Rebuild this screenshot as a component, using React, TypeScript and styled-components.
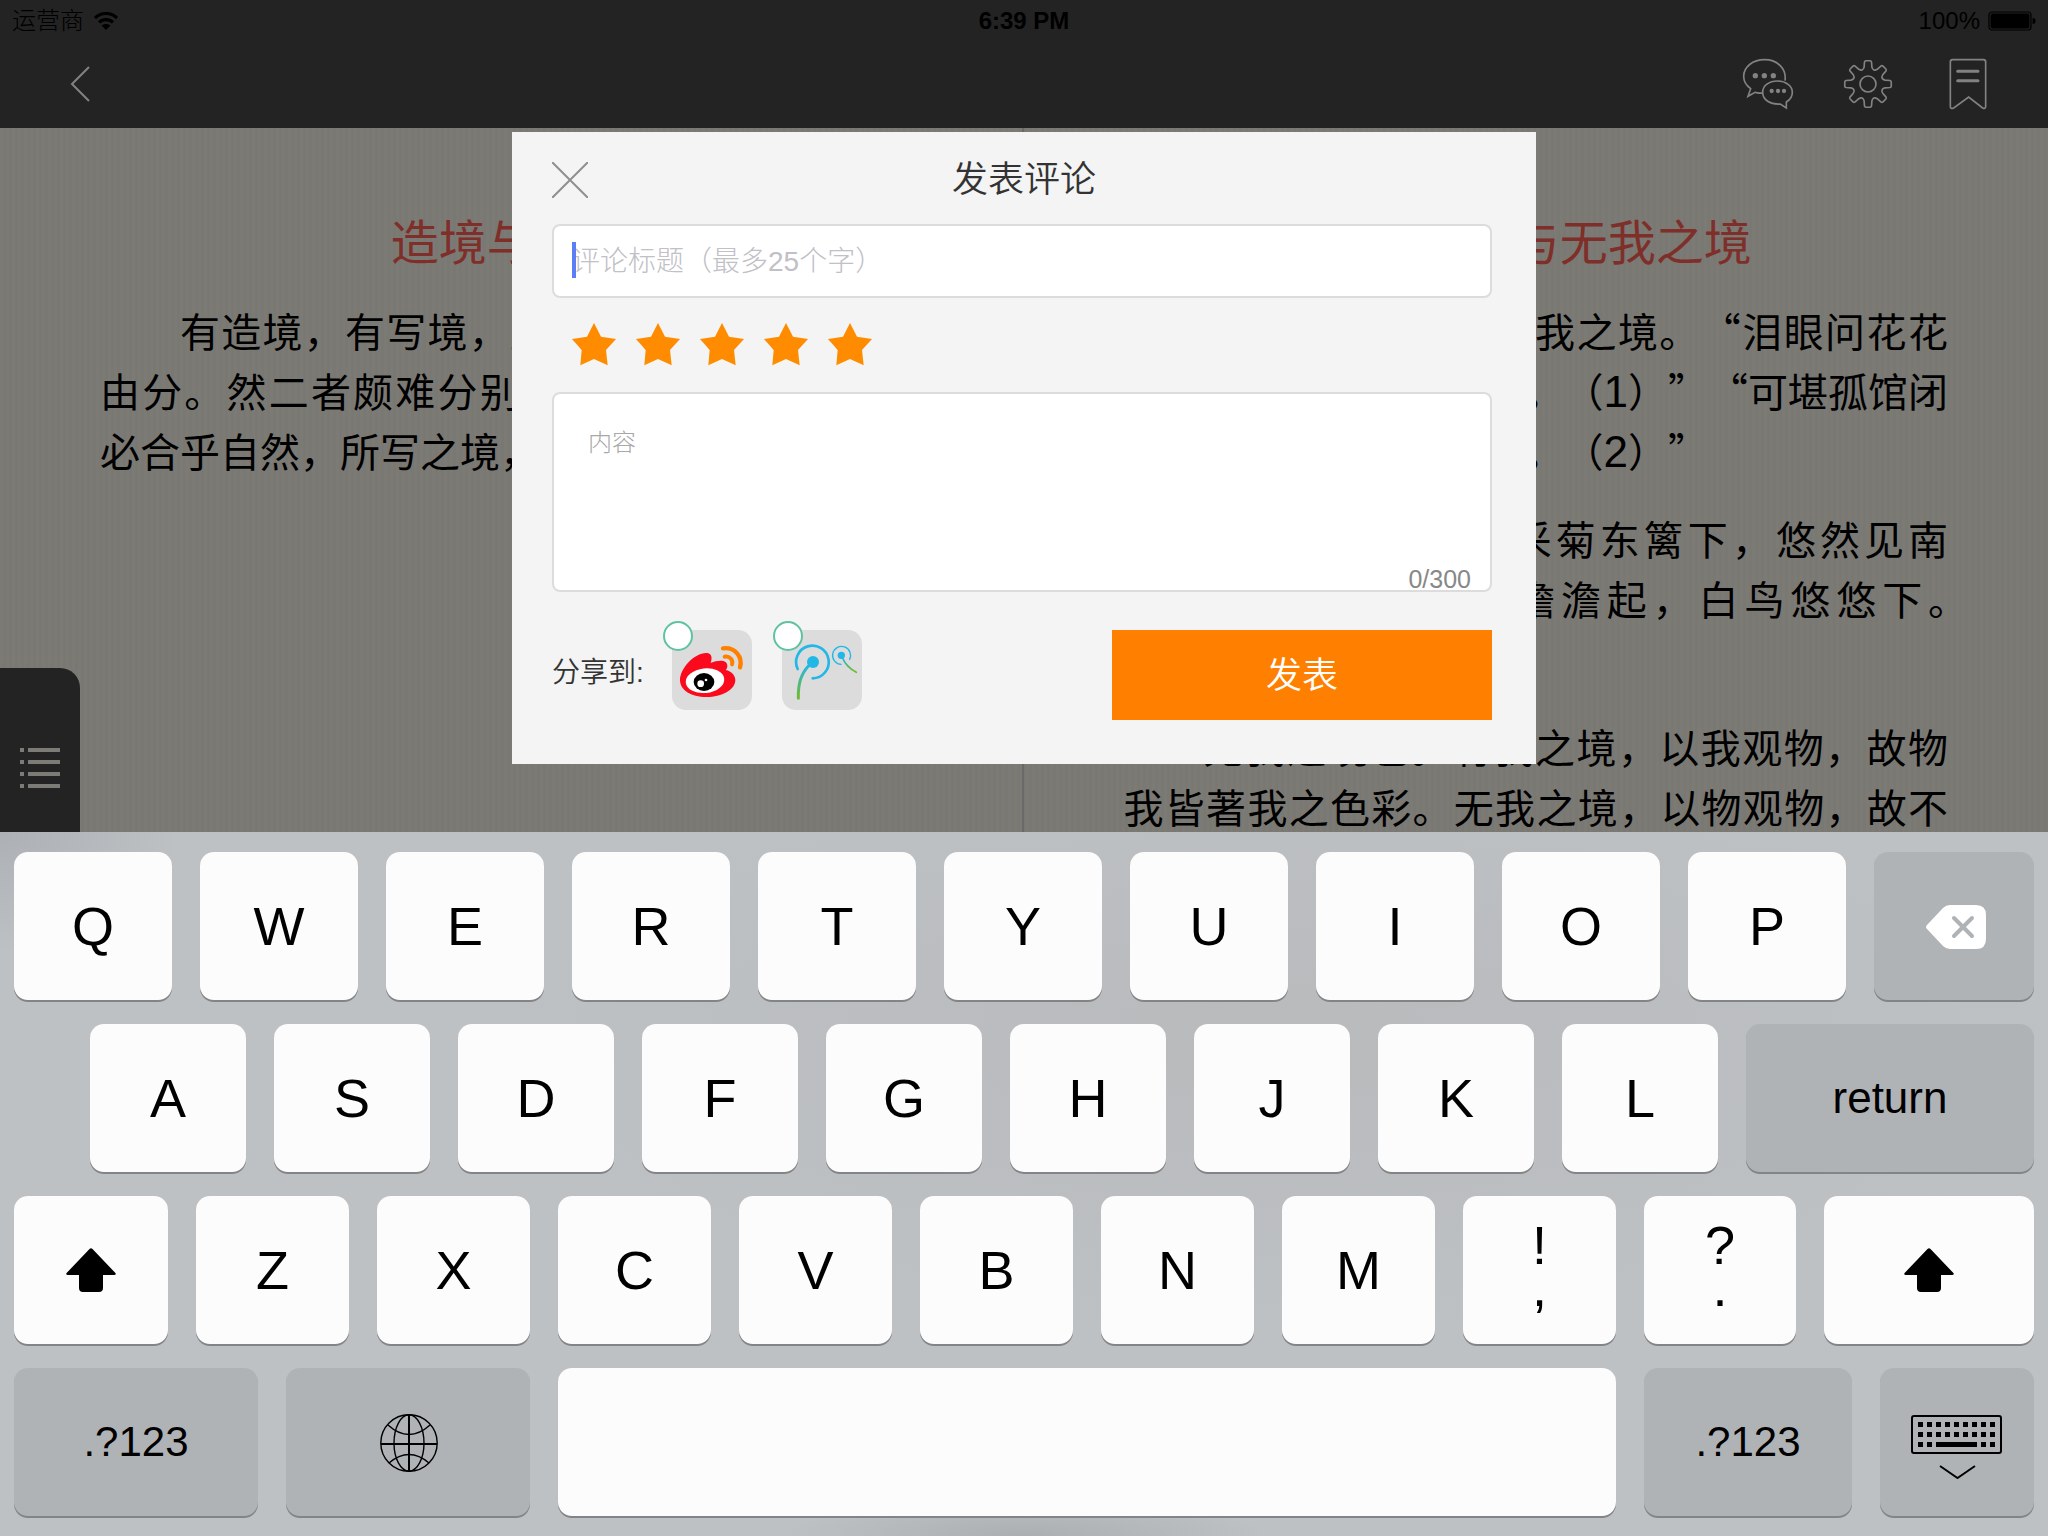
import React, { useState } from "react";
import styled, { createGlobalStyle, css } from "styled-components";

const GlobalStyle = createGlobalStyle`
  *, *::before, *::after { box-sizing: border-box; }
  body {
    margin: 0;
    font-family: "Liberation Sans", "Noto Sans CJK SC", sans-serif;
  }
  button, input, textarea { font: inherit; margin: 0; }
`;

const chrome = "#232323";
const accent = "#ff8000";
const cjk = `"Noto Sans CJK SC", "Liberation Sans", sans-serif`;

/* ---------- page ---------- */

const Page = styled.div`
  position: relative;
  display: flex;
  flex-direction: column;
  height: 100vh;
  overflow: hidden;
`;

const PlainButton = styled.button`
  display: flex;
  align-items: center;
  justify-content: center;
  padding: 0;
  border: 0;
  background: none;
  cursor: pointer;
`;

/* ---------- top bars ---------- */

const TopBar = styled.header`
  background: ${chrome};
`;

const StatusBar = styled.div`
  display: grid;
  grid-template-columns: 1fr auto 1fr;
  align-items: center;
  height: 42px;
  padding: 0 12px;
  font-size: 24px;
  line-height: 28px;
  color: #000;
`;

const StatusGroup = styled.div<{ $end?: boolean }>`
  display: flex;
  align-items: center;
  gap: ${(p) => (p.$end ? 8 : 10)}px;
  justify-content: ${(p) => (p.$end ? "flex-end" : "flex-start")};
  font-weight: 300;
`;

const Clock = styled.time`
  font-weight: 700;
`;

const NavBar = styled.nav`
  display: flex;
  justify-content: space-between;
  align-items: center;
  height: 86px;
  padding: 0 60px 2px;
  color: #828282;
`;

const NavActions = styled.div`
  display: flex;
  align-items: center;
  gap: 40px;
`;

const NavButton = styled(PlainButton)`
  width: 60px;
  height: 60px;
  color: inherit;
`;

const BackButton = styled(NavButton)`
  width: 40px;
`;

const BookmarkButton = styled(NavButton)`
  width: 40px;
  margin-left: 10px;
`;

/* ---------- reader ---------- */

const Reader = styled.main`
  position: relative;
  flex: 1 1 0;
  min-height: 0;
  overflow: hidden;
  display: grid;
  grid-template-columns: 1fr 2px 1fr;
  background: repeating-linear-gradient(90deg, #7c7a75 0 3px, #7a7873 3px 6px);
`;

const Spine = styled.div`
  background: #6a686b;
`;

const Sheet = styled.article`
  padding: 76px 100px 0;
  font-family: ${cjk};
  text-spacing-trim: space-all;
`;

const ChapterTitle = styled.h2`
  margin: 0 0 26px;
  font-size: 48px;
  line-height: 70px;
  font-weight: 400;
  text-align: center;
  color: #7f2f29;
`;

const Paragraph = styled.p`
  margin: 0 0 28px;
  font-size: 40px;
  line-height: 60px;
  color: #000;
`;

const Line = styled.span<{ $indent?: boolean; $hang?: boolean; $ragged?: boolean }>`
  display: block;
  height: 60px;
  white-space: nowrap;
  text-align-last: ${(p) => (p.$ragged ? "left" : "justify")};
  padding-left: ${(p) => (p.$indent ? "2em" : 0)};
  margin-right: ${(p) => (p.$hang ? "-0.5em" : 0)};
`;

const NoteNumber = styled.span`
  font-family: "Liberation Sans", sans-serif;
  font-size: 44px;
`;

const ContentsTab = styled(PlainButton)`
  position: absolute;
  left: 0;
  bottom: 0;
  width: 80px;
  height: 164px;
  padding-top: 38px;
  border-top-right-radius: 20px;
  background: ${chrome};
  color: #7d7b75;
`;

/* ---------- comment dialog ---------- */

const Dialog = styled.form`
  position: absolute;
  top: 132px;
  left: 25%;
  width: 50%;
  padding: 26px 44px 44px 40px;
  background: #f4f4f4;
  color: #333;
`;

const DialogHeader = styled.div`
  display: grid;
  grid-template-columns: 36px 1fr 32px;
  align-items: center;
  margin-bottom: 22px;
`;

const CloseButton = styled(PlainButton)`
  width: 36px;
  height: 36px;
  color: #8f8f8f;
`;

const DialogTitle = styled.h1`
  margin: 0;
  font-size: 36px;
  line-height: 44px;
  font-weight: 350;
  text-align: center;
`;

const Field = styled.div`
  position: relative;
  display: flex;
`;

const fieldBox = css`
  width: 100%;
  border: 2px solid #dcdcdc;
  border-radius: 8px;
  background: #fff;
  outline: none;
  font-weight: 300;
  color: #333;
`;

const TitleInput = styled.input`
  ${fieldBox}
  height: 74px;
  padding: 2px 18px 0;
  font-size: 28px;
  caret-color: transparent;
  &::placeholder { color: #c0c0c6; opacity: 1; }
`;

const Caret = styled.span`
  position: absolute;
  left: 20px;
  top: 18px;
  width: 4px;
  height: 36px;
  background: #5b7ef5;
`;

const Rating = styled.div`
  display: flex;
  align-items: center;
  gap: 20px;
  height: 94px;
  padding-left: 20px;
`;

const StarButton = styled(PlainButton)<{ $on: boolean }>`
  width: 44px;
  height: 44px;
  color: ${(p) => (p.$on ? "#ff8c00" : "#dcdcdc")};
`;

const BodyInput = styled.textarea`
  ${fieldBox}
  height: 200px;
  padding: 32px 34px;
  font-size: 24px;
  line-height: 34px;
  resize: none;
  &::placeholder { color: #a8a8a8; opacity: 1; }
`;

const Counter = styled.output`
  position: absolute;
  right: 21px;
  bottom: 0;
  font-size: 25px;
  line-height: 26px;
  color: #888;
`;

const DialogFooter = styled.div`
  display: flex;
  justify-content: space-between;
  align-items: flex-start;
  margin-top: 38px;
`;

const ShareGroup = styled.div`
  display: flex;
  align-items: center;
  gap: 28px;
  font-size: 28px;
  font-weight: 350;
`;

const ShareTiles = styled.div`
  display: flex;
  gap: 30px;
`;

const ShareTile = styled.label`
  position: relative;
  display: block;
  width: 80px;
  height: 80px;
  border-radius: 14px;
  background: #dcdcdc;
  cursor: pointer;
`;

const ShareCheck = styled.input`
  appearance: none;
  position: absolute;
  left: -9px;
  top: -9px;
  width: 30px;
  height: 30px;
  border: 2px solid #5fc2a0;
  border-radius: 50%;
  background: #fff;
  &:checked { background: #5fc2a0; }
`;

const SubmitButton = styled(PlainButton)`
  width: 380px;
  height: 90px;
  padding-bottom: 6px;
  background: ${accent};
  color: #fff;
  font-size: 36px;
  font-weight: 350;
`;

/* ---------- keyboard ---------- */

const Keyboard = styled.section`
  display: flex;
  flex-direction: column;
  gap: 24px;
  padding: 20px 14px;
  background:
    radial-gradient(ellipse 180px 120px at 0 0, #adb0b4 0, transparent 100%),
    radial-gradient(ellipse 240px 40px at 50% 100%, #acafb2 0, transparent 100%),
    radial-gradient(ellipse 800px 300px at 62% 30%, #b8babc 0, transparent 100%),
    #bec1c4;
`;

const KeyRow = styled.div<{ $inset?: boolean }>`
  display: flex;
  gap: 28px;
  padding-left: ${(p) => (p.$inset ? 76 : 0)}px;
`;

const Key = styled(PlainButton)<{ $grow: number; $dark?: boolean; $size?: number }>`
  flex: ${(p) => p.$grow} 1 0;
  min-width: 0;
  height: 148px;
  border-radius: 14px;
  background: ${(p) => (p.$dark ? "#b0b3b6" : "#fcfcfc")};
  box-shadow: 0 2px 0 #828486;
  color: #000;
  font-size: ${(p) => p.$size ?? 54}px;
  line-height: 44px;
`;

const StackedKey = styled(Key)`
  flex-direction: column;
  padding-bottom: 8px;
  line-height: 42px;
`;

/* ---------- icons ---------- */

const WifiIcon = () => (
  <svg width="24" height="18" viewBox="0 0 24 18" aria-hidden="true">
    <path d="M1 6 C7 0 17 0 23 6" fill="none" stroke="currentColor" strokeWidth="3.2" />
    <path d="M5 10.4 C9 6.6 15 6.6 19 10.4" fill="none" stroke="currentColor" strokeWidth="3.2" />
    <path d="M12 18 L7.6 13.6 C10 11.6 14 11.6 16.4 13.6Z" fill="currentColor" />
  </svg>
);

const BatteryIcon = () => (
  <svg width="48" height="20" viewBox="0 0 48 20" aria-hidden="true">
    <rect x="1" y="1" width="42" height="18" rx="3" fill="none" stroke="currentColor" strokeWidth="1.2" />
    <rect x="2.6" y="2.6" width="38.8" height="14.8" rx="2" fill="currentColor" />
    <path d="M44.6 7 Q47.6 7 47.6 10 Q47.6 13 44.6 13Z" fill="currentColor" />
  </svg>
);

const BackIcon = () => (
  <svg width="20" height="36" viewBox="0 0 20 36" aria-hidden="true">
    <path d="M19 1 L2 18 L19 35" fill="none" stroke="currentColor" strokeWidth="2" />
  </svg>
);

const CommentsIcon = () => (
  <svg width="52" height="52" viewBox="66 54 156 156" aria-hidden="true">
    <g fill="none" stroke="currentColor" strokeWidth="5">
      <path d="M195 122 C200 86 172 59 134 59 C98 59 71 81 71 109 C71 124 79 137 92 146 L84 169 L105 157 C112 160 120 160 128 159" />
      <path d="M181 192 C150 194 128 180 128 157 C128 137 147 123 172 123 C198 123 217 138 217 157 C217 169 210 180 199 186 L199 204Z" />
    </g>
    <g fill="currentColor">
      {[106, 133, 160].map((x) => <circle key={x} cx={x} cy="107" r="8" />)}
      {[155, 174, 192].map((x) => <circle key={x} cx={x} cy="153" r="6.5" />)}
    </g>
  </svg>
);

const gearPath = (() => {
  const at = (deg: number, r: number) => {
    const a = (deg * Math.PI) / 180;
    return `${(75 + r * Math.cos(a)).toFixed(1)} ${(75 + r * Math.sin(a)).toFixed(1)}`;
  };
  let d = "";
  for (let i = 0; i < 8; i += 1) {
    const c = i * 45;
    d += `${i ? "L" : "M"}${at(c - 13, 52)} L${at(c - 9, 67)} Q${at(c - 8, 70)} ${at(c - 5, 70)} `;
    d += `L${at(c + 5, 70)} Q${at(c + 8, 70)} ${at(c + 9, 67)} L${at(c + 13, 52)} `;
    d += `Q${at(c + 22.5, 40)} ${at(c + 32, 52)} `;
  }
  return `${d}Z`;
})();

const GearIcon = () => (
  <svg width="50" height="50" viewBox="0 0 150 150" aria-hidden="true">
    <g fill="none" stroke="currentColor" strokeWidth="5" strokeLinejoin="round">
      <path d={gearPath} />
      <circle cx="75" cy="75" r="24" />
    </g>
  </svg>
);

const BookmarkIcon = () => (
  <svg width="38" height="52" viewBox="686 54 114 156" aria-hidden="true">
    <path
      d="M697 59 H789 Q796 59 796 66 V200 Q795 208 787 204 L745 171 L700 204 Q690 208 690 200 V66 Q690 59 697 59Z"
      fill="none" stroke="currentColor" strokeWidth="5"
    />
    <path d="M712 94 H773 M712 122 H773" stroke="currentColor" strokeWidth="9" strokeLinecap="round" />
  </svg>
);

const ListIcon = () => (
  <svg width="40" height="42" viewBox="0 0 40 42" aria-hidden="true" fill="currentColor">
    {[0, 12, 24, 36].map((y) => (
      <g key={y}>
        <rect x="0" y={y} width="4" height="4" />
        <rect x="8" y={y} width="32" height="4" />
      </g>
    ))}
  </svg>
);

const CloseIcon = () => (
  <svg width="36" height="36" viewBox="0 0 36 36" aria-hidden="true">
    <path d="M0 0 L36 36 M36 0 L0 36" stroke="currentColor" strokeWidth="2" />
  </svg>
);

const StarIcon = () => (
  <svg width="44" height="44" viewBox="185 608 132 132" aria-hidden="true">
    <path
      d="M251 608 L272 649 L317 656 L287 689 L292 735 L251 716 L210 735 L214 689 L185 656 L230 649Z"
      fill="currentColor"
    />
  </svg>
);

const WeiboIcon = () => (
  <svg width="80" height="80" viewBox="96 60 240 240" aria-hidden="true">
    <path
      d="M120 210 C120 175 165 126 202 129 C216 131 217 145 212 159 C235 149 263 148 262 168 C262 173 260 177 257 180 C275 184 286 196 286 210 C286 240 245 261 200 261 C152 261 120 240 120 210Z"
      fill="#fa0a1c"
    />
    <ellipse cx="195" cy="212" rx="58" ry="37" fill="#fff" transform="rotate(-6 195 212)" />
    <ellipse cx="192" cy="216" rx="31" ry="27" fill="#000" />
    <circle cx="182" cy="221" r="10" fill="#fff" />
    <circle cx="198" cy="210" r="4" fill="#fff" />
    <g fill="none" stroke={accent} strokeLinecap="round">
      <path d="M249 115 C285 111 309 140 300 172" strokeWidth="13" />
      <path d="M254 140 C270 138 280 150 276 163" strokeWidth="12" />
    </g>
  </svg>
);

const TencentIcon = () => (
  <svg width="80" height="80" viewBox="426 60 240 240" aria-hidden="true">
    <defs>
      <linearGradient id="stem" gradientUnits="userSpaceOnUse" x1="0" y1="165" x2="0" y2="255">
        <stop offset="0" stopColor="#21b8e8" />
        <stop offset="1" stopColor="#6cba3c" />
      </linearGradient>
      <linearGradient id="sprig" gradientUnits="userSpaceOnUse" x1="0" y1="143" x2="0" y2="180">
        <stop offset="0" stopColor="#21b8e8" />
        <stop offset="1" stopColor="#6cba3c" />
      </linearGradient>
    </defs>
    <circle cx="519" cy="156" r="18" fill="#21b8e8" />
    <circle cx="604" cy="136" r="11" fill="#21b8e8" />
    <g fill="none" strokeLinecap="round">
      <path d="M473 177 A49 49 0 1 1 518 205" stroke="#21b8e8" strokeWidth="8" />
      <path d="M508 165 C482 192 474 222 475 265" stroke="url(#stem)" strokeWidth="9" />
      <path d="M603 163 A27 27 0 1 1 629 148" stroke="#21b8e8" strokeWidth="4" />
      <path d="M607 143 C615 162 630 177 649 187" stroke="url(#sprig)" strokeWidth="5" />
    </g>
  </svg>
);

const ShiftIcon = () => (
  <svg width="50" height="44" viewBox="0 0 50 44" aria-hidden="true">
    <path
      d="M23.5 1 Q25 -0.4 26.5 1 L49.4 25 Q50.6 27 48 27 H37 V40 Q37 44 33 44 H17 Q13 44 13 40 V27 H2 Q-0.6 27 0.6 25Z"
      fill="currentColor"
    />
  </svg>
);

const BackspaceIcon = () => (
  <svg width="64" height="46" viewBox="-4 -2 64 46" aria-hidden="true">
    <path
      d="M24 0 H50 Q60 0 60 10 V34 Q60 44 50 44 H24 Q20 44 17 41 L1 24 Q-1 22 1 20 L17 3 Q20 0 24 0Z"
      fill="#fff"
    />
    <path d="M28 13 L46 31 M46 13 L28 31" stroke="#b0b3b6" strokeWidth="4" strokeLinecap="round" />
  </svg>
);

const GlobeIcon = () => (
  <svg width="60" height="60" viewBox="-2 -2 60 60" aria-hidden="true" overflow="visible">
    <g fill="none" stroke="currentColor" strokeWidth="1.4">
      <circle cx="29" cy="29" r="28.2" />
      <ellipse cx="29" cy="29" rx="15" ry="28.2" />
      <path d="M8 11 Q29 30 50 11 M9 49 Q29 32 49 49" />
      <path d="M29 1 V57 M1 30 H57" strokeWidth="2" />
    </g>
  </svg>
);

const HideKeyboardIcon = () => (
  <svg width="92" height="74" viewBox="0 -10 92 74" aria-hidden="true">
    <rect x="1" y="1" width="89" height="37" rx="2" fill="none" stroke="currentColor" strokeWidth="2" />
    <g fill="currentColor">
      {[0, 1, 2, 3, 4, 5, 6, 7, 8].map((i) => (
        <g key={i}>
          <rect x={7 + i * 9} y="7" width="5" height="5" />
          <rect x={7 + i * 9} y="17" width="5" height="5" />
        </g>
      ))}
      {[7, 16, 70, 79].map((x) => <rect key={x} x={x} y="27" width="5" height="5" />)}
      <rect x="25" y="27" width="41" height="5" />
    </g>
    <path d="M29 51 L46.5 63 L64 51" fill="none" stroke="currentColor" strokeWidth="2" />
  </svg>
);

/* ---------- app ---------- */

export default function App() {
  const [title, setTitle] = useState("");
  const [body, setBody] = useState("");
  const [stars, setStars] = useState(5);

  return (
    <Page>
      <GlobalStyle />

      <TopBar>
        <StatusBar>
          <StatusGroup>
            <span>运营商</span>
            <WifiIcon />
          </StatusGroup>
          <Clock>6:39 PM</Clock>
          <StatusGroup $end>
            <span>100%</span>
            <BatteryIcon />
          </StatusGroup>
        </StatusBar>
        <NavBar>
          <BackButton type="button" aria-label="返回"><BackIcon /></BackButton>
          <NavActions>
            <NavButton type="button" aria-label="评论"><CommentsIcon /></NavButton>
            <NavButton type="button" aria-label="设置"><GearIcon /></NavButton>
            <BookmarkButton type="button" aria-label="书签"><BookmarkIcon /></BookmarkButton>
          </NavActions>
        </NavBar>
      </TopBar>

      <Reader>
        <Sheet>
          <ChapterTitle>造境与写境</ChapterTitle>
          <Paragraph>
            <Line $indent>有造境，有写境，此理想与写实二派之所</Line>
            <Line $hang>由分。然二者颇难分别。因大诗人所造之境，</Line>
            <Line $ragged>必合乎自然，所写之境，亦必邻于理想故也。</Line>
          </Paragraph>
        </Sheet>
        <Spine />
        <Sheet>
          <ChapterTitle>有我之境与无我之境</ChapterTitle>
          <Paragraph>
            <Line $indent>有有我之境，有无我之境。“泪眼问花花</Line>
            <Line>不语，乱红飞过秋千去。（<NoteNumber>1</NoteNumber>）”“可堪孤馆闭</Line>
            <Line $ragged>春寒，杜鹃声里斜阳暮。（<NoteNumber>2</NoteNumber>）”</Line>
          </Paragraph>
          <Paragraph>
            <Line $indent>有我之境也。“采菊东篱下，悠然见南</Line>
            <Line $hang>山。（<NoteNumber>3</NoteNumber>）”“寒波澹澹起，白鸟悠悠下。</Line>
            <Line $ragged>（<NoteNumber>4</NoteNumber>）”</Line>
          </Paragraph>
          <Paragraph>
            <Line $indent>无我之境也。有我之境，以我观物，故物</Line>
            <Line>我皆著我之色彩。无我之境，以物观物，故不</Line>
          </Paragraph>
        </Sheet>
        <ContentsTab type="button" aria-label="目录"><ListIcon /></ContentsTab>
      </Reader>

      <Keyboard aria-label="键盘">
        <KeyRow>
          {[..."QWERTYUIOP"].map((k) => <Key type="button" key={k} $grow={158}>{k}</Key>)}
          <Key type="button" $grow={160} $dark aria-label="删除"><BackspaceIcon /></Key>
        </KeyRow>
        <KeyRow $inset>
          {[..."ASDFGHJKL"].map((k) => <Key type="button" key={k} $grow={156}>{k}</Key>)}
          <Key type="button" $grow={288} $dark $size={44}>return</Key>
        </KeyRow>
        <KeyRow>
          <Key type="button" $grow={154} aria-label="上档"><ShiftIcon /></Key>
          {[..."ZXCVBNM"].map((k) => <Key type="button" key={k} $grow={153}>{k}</Key>)}
          <StackedKey type="button" $grow={153}><span>!</span><span>,</span></StackedKey>
          <StackedKey type="button" $grow={152}><span>?</span><span>.</span></StackedKey>
          <Key type="button" $grow={210} aria-label="上档"><ShiftIcon /></Key>
        </KeyRow>
        <KeyRow>
          <Key type="button" $grow={244} $dark $size={42}>.?123</Key>
          <Key type="button" $grow={244} $dark aria-label="切换语言"><GlobeIcon /></Key>
          <Key type="button" $grow={1058} aria-label="空格" />
          <Key type="button" $grow={208} $dark $size={42}>.?123</Key>
          <Key type="button" $grow={154} $dark aria-label="收起键盘"><HideKeyboardIcon /></Key>
        </KeyRow>
      </Keyboard>

      <Dialog role="dialog" aria-labelledby="dialog-title" onSubmit={(e) => e.preventDefault()}>
        <DialogHeader>
          <CloseButton type="button" aria-label="关闭"><CloseIcon /></CloseButton>
          <DialogTitle id="dialog-title">发表评论</DialogTitle>
        </DialogHeader>
        <Field>
          <TitleInput
            aria-label="评论标题"
            placeholder="评论标题（最多25个字）"
            maxLength={25}
            value={title}
            onChange={(e) => setTitle(e.target.value)}
          />
          <Caret />
        </Field>
        <Rating role="group" aria-label="评分">
          {[1, 2, 3, 4, 5].map((n) => (
            <StarButton type="button" key={n} $on={n <= stars} aria-label={`${n}星`} onClick={() => setStars(n)}>
              <StarIcon />
            </StarButton>
          ))}
        </Rating>
        <Field>
          <BodyInput
            aria-label="内容"
            placeholder="内容"
            maxLength={300}
            value={body}
            onChange={(e) => setBody(e.target.value)}
          />
          <Counter>{body.length}/300</Counter>
        </Field>
        <DialogFooter>
          <ShareGroup>
            <span>分享到:</span>
            <ShareTiles>
              <ShareTile>
                <WeiboIcon />
                <ShareCheck type="checkbox" aria-label="新浪微博" />
              </ShareTile>
              <ShareTile>
                <TencentIcon />
                <ShareCheck type="checkbox" aria-label="腾讯微博" />
              </ShareTile>
            </ShareTiles>
          </ShareGroup>
          <SubmitButton type="submit">发表</SubmitButton>
        </DialogFooter>
      </Dialog>
    </Page>
  );
}
